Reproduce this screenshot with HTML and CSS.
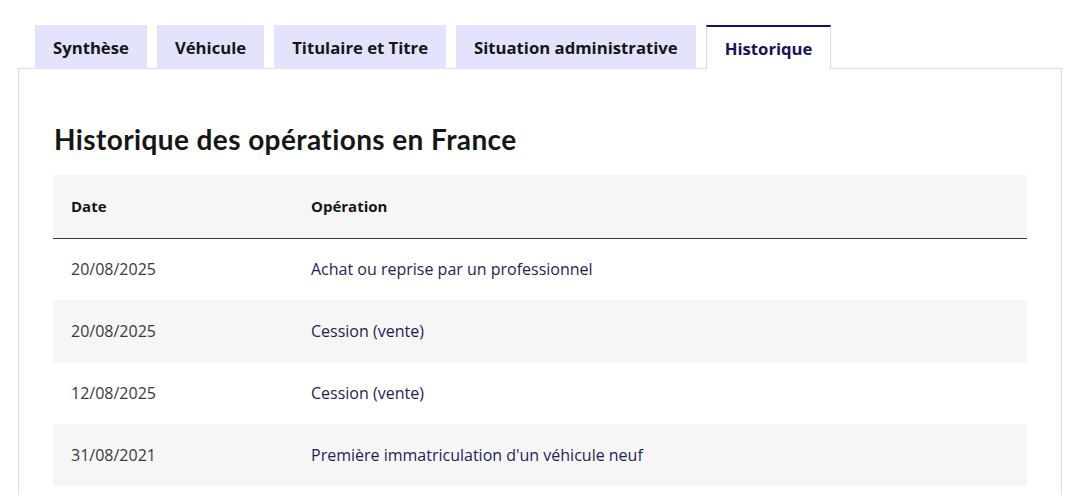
FILE: index.html
```html
<!DOCTYPE html>
<html lang="fr">
<head>
<meta charset="utf-8">
<link rel="stylesheet" href="styles.css">
</head>
<body>
<div class="page">
  <ul class="tabs">
    <li class="tab">Synthèse</li>
    <li class="tab">Véhicule</li>
    <li class="tab">Titulaire et Titre</li>
    <li class="tab">Situation administrative</li>
    <li class="tab tab-active">Historique</li>
  </ul>
  <section class="panel">
    <h2 class="title">Historique des opérations en France</h2>
    <table class="table">
      <thead>
        <tr><th class="col-date">Date</th><th>Opération</th></tr>
      </thead>
      <tbody>
        <tr><td class="date">20/08/2025</td><td class="op">Achat ou reprise par un professionnel</td></tr>
        <tr><td class="date">20/08/2025</td><td class="op">Cession (vente)</td></tr>
        <tr><td class="date">12/08/2025</td><td class="op">Cession (vente)</td></tr>
        <tr><td class="date">31/08/2021</td><td class="op">Première immatriculation d'un véhicule neuf</td></tr>
      </tbody>
    </table>
  </section>
</div>
</body>
</html>
```
FILE: styles.css
```css
* { box-sizing: border-box; }
html, body { margin: 0; padding: 0; background: #fff; }
body { font-family: "Open Sans", Lato, sans-serif; color: #161616; }
.page { padding: 25px 0 0 18px; width: 1062px; }
.tabs {
  list-style: none; margin: 0; padding: 0 0 0 17px;
  display: flex; gap: 10px; position: relative; z-index: 1;
}
.tab {
  height: 44px; padding: 0 18px; background: #e3e3fd;
  display: flex; align-items: center;
  font-weight: 700; font-size: 16.7px; color: #161616;
  margin-bottom: -1px;
}
.tab-active {
  background: #fff; color: #14145c;
  border-top: 2px solid #14145c;
  border-left: 1px solid #ddd; border-right: 1px solid #ddd;
}
.panel {
  border: 1px solid #ddd; border-bottom: none;
  padding: 52px 34px 40px 34px;
}
.title {
  margin: 0 0 18px 1px; font-family: Lato, "Open Sans", sans-serif;
  font-size: 28px; letter-spacing: 0.4px; font-weight: 700; line-height: 36px; color: #161616;
}
.table { width: 100%; border-collapse: collapse; font-size: 16px; }
.table th {
  text-align: left; font-weight: 700; font-size: 15px; background: #f6f6f6;
  height: 63px; padding: 0 18px; border-bottom: 1px solid #3a3a3a;
}
.col-date { width: 240px; }
.table td { height: 62px; padding: 0 18px; }
.table tbody tr:nth-child(even) td { background: #f6f6f6; }
.date { color: #3a3a3a; }
.op { color: #1e1e55; }
```
